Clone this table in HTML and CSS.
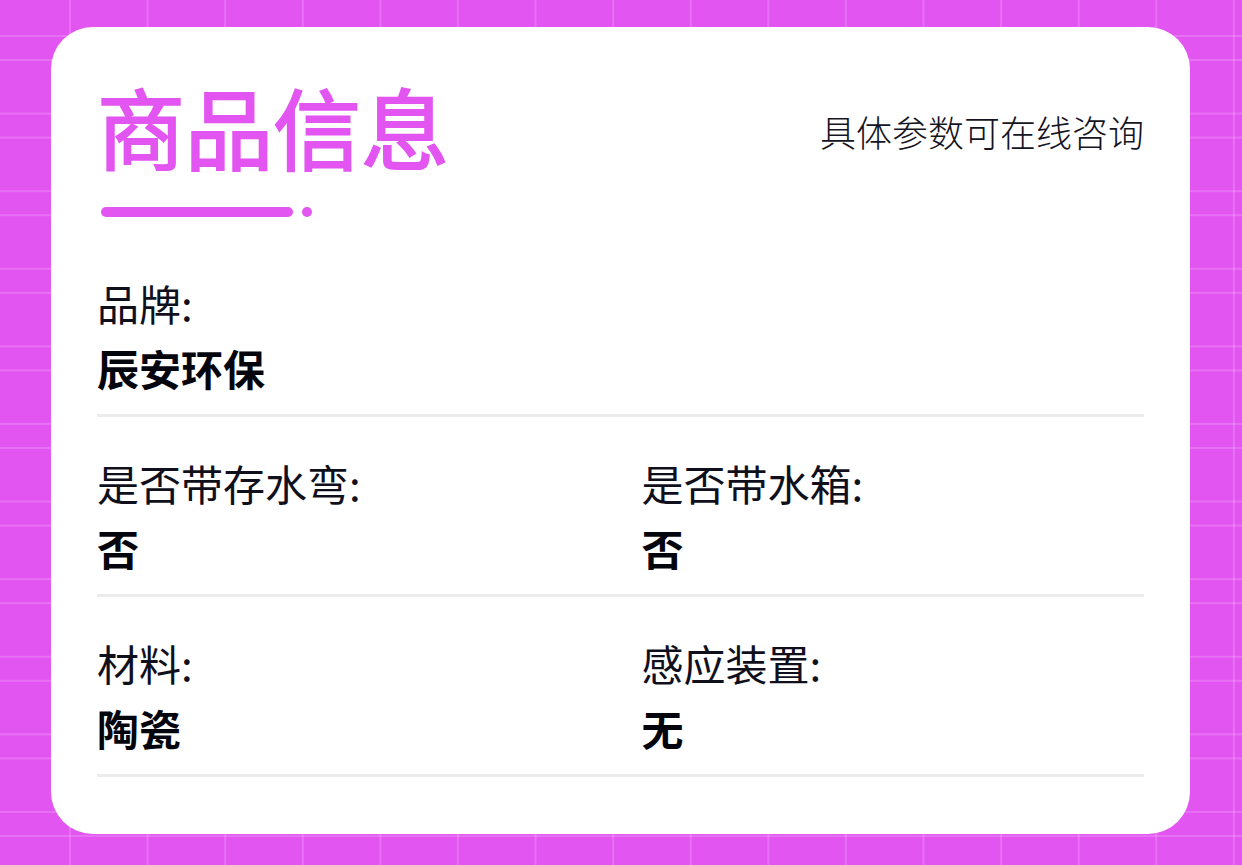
FILE: index.html
```html
<!DOCTYPE html>
<html lang="zh-CN">
<head>
<meta charset="utf-8">
<title>商品信息</title>
<link rel="stylesheet" href="styles.css">
</head>
<body>
<div class="page">
  <section class="card">
    <header class="header">
      <div class="title-block">
        <h1 class="title">商品信息</h1>
        <div class="underline"><span class="bar"></span><span class="dot"></span></div>
      </div>
      <p class="subtitle">具体参数可在线咨询</p>
    </header>
    <div class="specs">
      <div class="row">
        <div class="cell">
          <div class="label">品牌:</div>
          <div class="value">辰安环保</div>
        </div>
      </div>
      <div class="row">
        <div class="cell">
          <div class="label">是否带存水弯:</div>
          <div class="value">否</div>
        </div>
        <div class="cell">
          <div class="label">是否带水箱:</div>
          <div class="value">否</div>
        </div>
      </div>
      <div class="row">
        <div class="cell">
          <div class="label">材料:</div>
          <div class="value">陶瓷</div>
        </div>
        <div class="cell">
          <div class="label">感应装置:</div>
          <div class="value">无</div>
        </div>
      </div>
    </div>
  </section>
</div>
</body>
</html>
```

FILE: styles.css
```css
html, body {
  margin: 0;
  padding: 0;
}

body {
  width: 1242px;
  height: 865px;
  overflow: hidden;
  font-family: "Noto Sans CJK SC", "Noto Sans", sans-serif;
  background-color: #e355f1;
  background-image:
    linear-gradient(to right, rgba(255,255,255,0.16) 2px, transparent 2px),
    linear-gradient(to bottom, rgba(255,255,255,0.16) 2px, transparent 2px),
    linear-gradient(to bottom, rgba(255,255,255,0.16) 2px, transparent 2px);
  background-size: 77.6px 100%, 100% 77.6px, 100% 77.6px;
  background-position: -8.6px 0, 0 35px, 0 447px;
  background-repeat: repeat-x, repeat-y, repeat-y;
}

.page {
  box-sizing: border-box;
  width: 1242px;
  height: 865px;
  padding: 27px 52px 31px 51px;
}

.card {
  box-sizing: border-box;
  height: 100%;
  background: #ffffff;
  border-radius: 42px;
  padding: 54px 46px 0 46px;
}

.header {
  display: flex;
  justify-content: space-between;
  align-items: flex-start;
}

.title {
  margin: 0;
  font-size: 88px;
  line-height: 88px;
  font-weight: 400;
  color: #e355f1;
  -webkit-text-stroke: 2px #e355f1;
  letter-spacing: 0;
}

.underline {
  display: flex;
  align-items: center;
  gap: 9px;
  margin-top: 38px;
  padding-left: 4px;
}

.bar {
  width: 192px;
  height: 10px;
  border-radius: 5px;
  background: #e355f1;
}

.dot {
  width: 10px;
  height: 10px;
  border-radius: 50%;
  background: #e355f1;
}

.subtitle {
  margin: 26px 0 0 0;
  font-size: 36px;
  line-height: 48px;
  font-weight: 300;
  color: #141422;
}

.specs {
  margin-top: 62px;
}

.row {
  display: grid;
  grid-template-columns: 1fr 1fr;
  column-gap: 42px;
  padding: 0 0 22px 0;
  border-bottom: 3px solid #ececec;
}

.row + .row {
  padding-top: 42px;
}

.label {
  font-size: 42px;
  line-height: 48px;
  font-weight: 400;
  color: #10101c;
}

.value {
  margin-top: 17px;
  font-size: 42px;
  line-height: 48px;
  font-weight: 700;
  color: #05050d;
}
```
